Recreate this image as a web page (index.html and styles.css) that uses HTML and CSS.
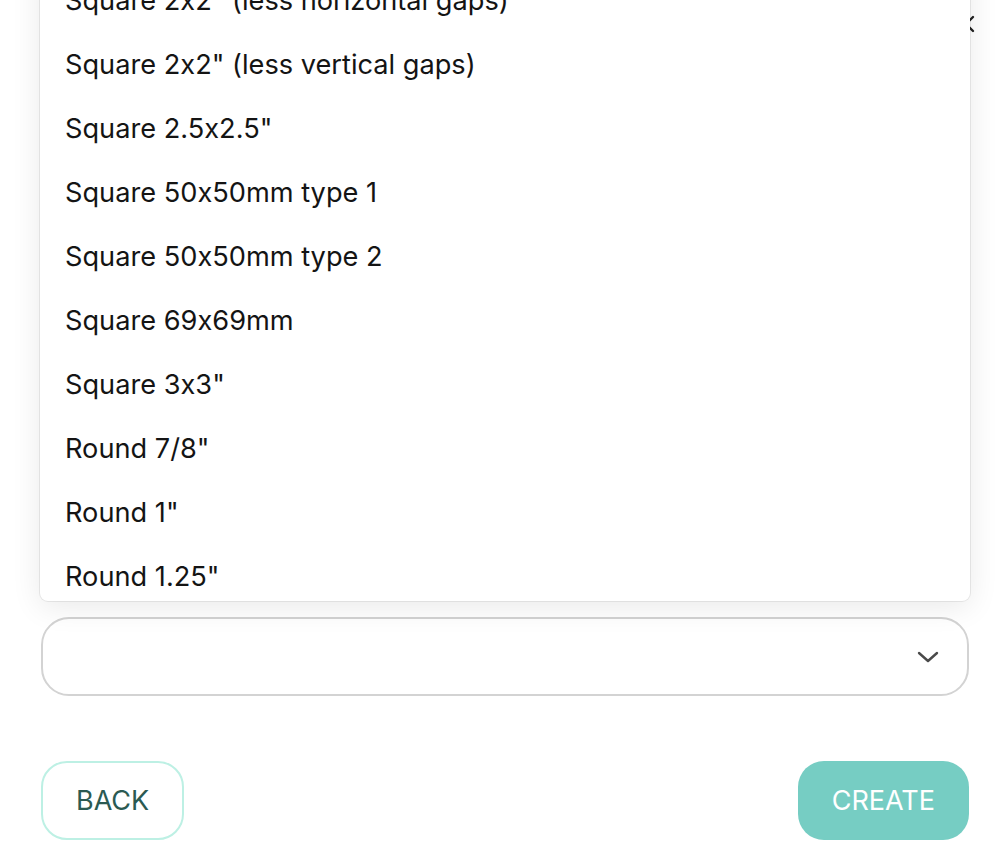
FILE: index.html
```html
<!DOCTYPE html>
<html lang="en">
<head>
<meta charset="utf-8">
<title>Create label</title>
<link rel="stylesheet" href="styles.css">
</head>
<body>
<div class="modal">
  <div class="header">
    <button class="close" aria-label="Close">
      <svg width="18" height="18" viewBox="0 0 18 18"><path d="M2 2 L16 16 M16 2 L2 16" stroke="#222" stroke-width="2.4" stroke-linecap="round" fill="none"/></svg>
    </button>
  </div>
  <div class="fields"></div>
  <div class="select">
    <svg class="chevron" width="22" height="12" viewBox="0 0 22 12"><path d="M2 2 L11 10 L20 2" stroke="#4a4a4a" stroke-width="2.4" stroke-linecap="round" stroke-linejoin="round" fill="none"/></svg>
  </div>
  <div class="actions">
    <button class="btn btn-back">BACK</button>
    <button class="btn btn-create">CREATE</button>
  </div>

  <ul class="menu">
    <li class="item">Square 2x2" (less horizontal gaps)</li>
    <li class="item">Square 2x2" (less vertical gaps)</li>
    <li class="item">Square 2.5x2.5"</li>
    <li class="item">Square 50x50mm type 1</li>
    <li class="item">Square 50x50mm type 2</li>
    <li class="item">Square 69x69mm</li>
    <li class="item">Square 3x3"</li>
    <li class="item">Round 7/8"</li>
    <li class="item">Round 1"</li>
    <li class="item">Round 1.25"</li>
    <li class="item">Round 1.5"</li>
  </ul>
</div>
</body>
</html>
```

FILE: styles.css
```css
* { box-sizing: border-box; }

html, body {
  margin: 0;
  padding: 0;
  background: #ffffff;
  font-family: Inter, "Noto Sans", "Liberation Sans", sans-serif;
  font-feature-settings: "calt" 0;
  overflow: hidden;
}

.modal {
  position: relative;
  height: 866px;
  padding: 0 35px 0 41px;
  display: flex;
  flex-direction: column;
}

.header {
  display: flex;
  justify-content: flex-end;
  padding-top: 15px;
  margin-right: -6px;
}

.close {
  border: 0;
  background: none;
  padding: 0;
  width: 18px;
  height: 18px;
  display: block;
}

.close svg { display: block; }

.fields {
  height: 584px;
}

.select {
  height: 79px;
  border: 2px solid #d3d3d3;
  border-radius: 28px;
  display: flex;
  align-items: center;
  justify-content: flex-end;
  padding-right: 28px;
}

.chevron { display: block; }

.actions {
  margin-top: 65px;
  display: flex;
  justify-content: space-between;
}

.btn {
  height: 79px;
  padding: 0 34px;
  border-radius: 26px;
  font-family: Inter, "Noto Sans", "Liberation Sans", sans-serif;
  font-feature-settings: "calt" 0;
  font-size: 27px;
  font-weight: 400;
  letter-spacing: 0;
  cursor: pointer;
}

.btn-back {
  background: #ffffff;
  border: 2px solid #bdf0e4;
  color: #2b5a52;
  padding: 0 33px;
}

.btn-create {
  background: #76cdc3;
  border: 0;
  color: #ffffff;
}

.menu {
  position: absolute;
  left: 40px;
  right: 34px;
  top: -40px;
  height: 641px;
  margin: 0;
  padding: 8px 0 0;
  list-style: none;
  background: #ffffff;
  border-radius: 8px;
  overflow: hidden;
  box-shadow: 0 0 0 1px rgba(0, 0, 0, 0.07), 0 6px 30px rgba(0, 0, 0, 0.09);
}

.item {
  height: 64px;
  padding-left: 25px;
  display: flex;
  align-items: center;
  font-size: 27.2px;
  color: #141414;
  white-space: nowrap;
}
```
